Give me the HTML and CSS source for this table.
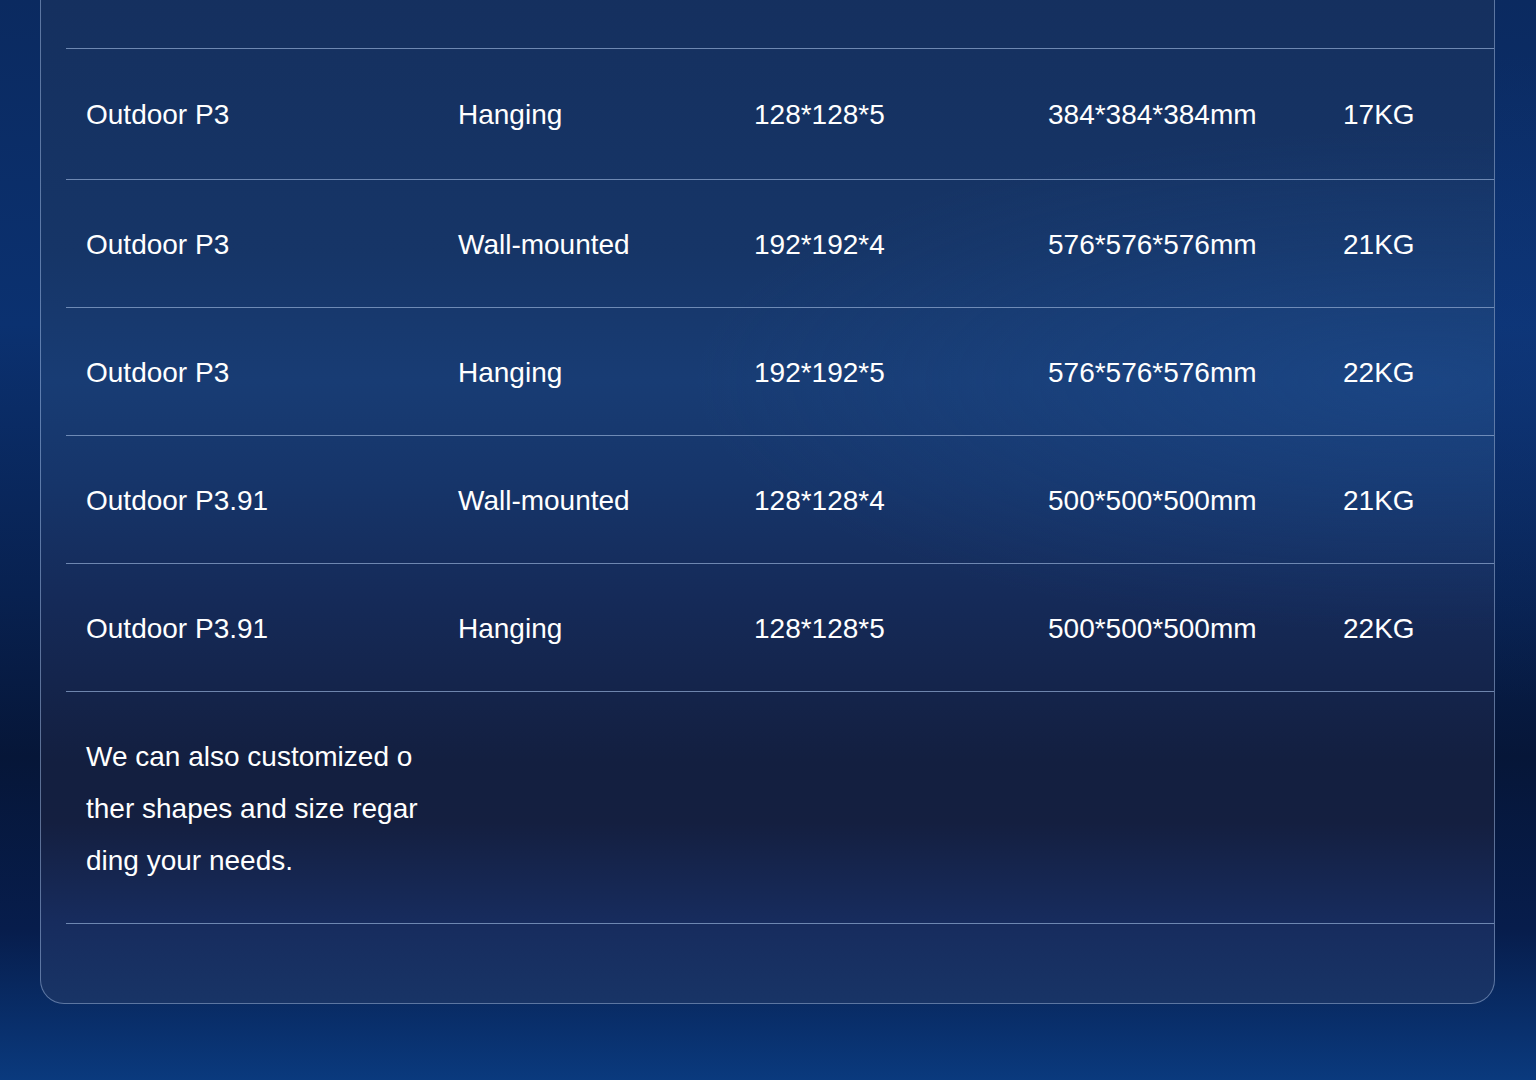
FILE: index.html
```html
<!DOCTYPE html>
<html lang="en">
<head>
  <meta charset="UTF-8" />
  <title>Outdoor LED Cube Specifications</title>
  <link rel="stylesheet" href="styles.css">
</head>
<body>
  <div class="page">
    <div class="spec-card">
      <table class="spec-table">
        <colgroup>
          <col class="col-model">
          <col class="col-install">
          <col class="col-res">
          <col class="col-size">
          <col class="col-weight">
        </colgroup>
        <tbody>
          <tr class="first">
            <td>Outdoor P3</td>
            <td>Hanging</td>
            <td>128*128*5</td>
            <td>384*384*384mm</td>
            <td>17KG</td>
          </tr>
          <tr>
            <td>Outdoor P3</td>
            <td>Wall-mounted</td>
            <td>192*192*4</td>
            <td>576*576*576mm</td>
            <td>21KG</td>
          </tr>
          <tr>
            <td>Outdoor P3</td>
            <td>Hanging</td>
            <td>192*192*5</td>
            <td>576*576*576mm</td>
            <td>22KG</td>
          </tr>
          <tr>
            <td>Outdoor P3.91</td>
            <td>Wall-mounted</td>
            <td>128*128*4</td>
            <td>500*500*500mm</td>
            <td>21KG</td>
          </tr>
          <tr>
            <td>Outdoor P3.91</td>
            <td>Hanging</td>
            <td>128*128*5</td>
            <td>500*500*500mm</td>
            <td>22KG</td>
          </tr>
          <tr class="note">
            <td>We can also customized other shapes and size regarding your needs.</td>
            <td></td>
            <td></td>
            <td></td>
            <td></td>
          </tr>
        </tbody>
      </table>
    </div>
  </div>
</body>
</html>
```

FILE: styles.css
```css
* {
  box-sizing: border-box;
}

body {
  margin: 0;
  padding: 0;
  min-height: 100vh;
  background:
    radial-gradient(ellipse 40% 30% at 100% 35%, rgba(20, 65, 140, 0.35), transparent),
    linear-gradient(180deg, #0b2a60 0%, #0b3170 30%, #082150 55%, #061638 70%, #071d4c 86%, #0a3a7e 100%);
  font-family: "Liberation Sans", Arial, sans-serif;
  color: #fff;
}

.page {
  padding: 0 41px 77px 40px;
}

.spec-card {
  border: 1px solid rgba(140, 165, 205, 0.6);
  border-top: none;
  border-radius: 0 0 24px 24px;
  padding: 48px 0 79px 25px;
  background:
    radial-gradient(ellipse 50% 25% at 95% 38%, rgba(30, 80, 150, 0.45), transparent),
    linear-gradient(180deg, #15305f 0%, #163567 25%, #183c74 38%, #16356a 48%, #152a58 60%, #131f40 76%, #141f40 82%, #172c5e 92%, #183466 100%);
}

.spec-table {
  width: 100%;
  border-collapse: collapse;
  table-layout: fixed;
  border-top: 1px solid rgba(140, 165, 205, 0.75);
}

.col-model { width: 372px; }
.col-install { width: 296px; }
.col-res { width: 294px; }
.col-size { width: 295px; }
.col-weight { width: 171px; }

.spec-table tr {
  border-bottom: 1px solid rgba(140, 165, 205, 0.75);
}

.spec-table td {
  padding: 51px 20px 48px;
  font-size: 28px;
  line-height: 28px;
  white-space: nowrap;
  vertical-align: middle;
}

.spec-table tr.first td {
  padding-top: 52px;
  padding-bottom: 50px;
}

.spec-table tr.note td {
  padding: 39px 20px 36px;
  line-height: 52px;
  white-space: normal;
  word-break: break-all;
}
```
